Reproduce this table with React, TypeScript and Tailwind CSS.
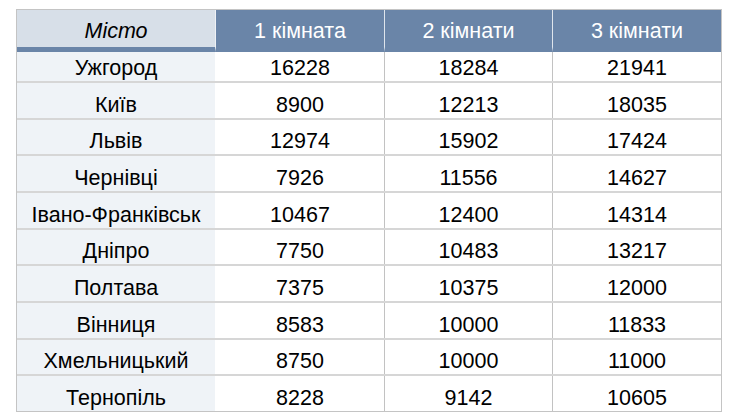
import React from "react";

const rows: [string, number, number, number][] = [
  ["Ужгород", 16228, 18284, 21941],
  ["Київ", 8900, 12213, 18035],
  ["Львів", 12974, 15902, 17424],
  ["Чернівці", 7926, 11556, 14627],
  ["Івано-Франківськ", 10467, 12400, 14314],
  ["Дніпро", 7750, 10483, 13217],
  ["Полтава", 7375, 10375, 12000],
  ["Вінниця", 8583, 10000, 11833],
  ["Хмельницький", 8750, 10000, 11000],
  ["Тернопіль", 8228, 9142, 10605],
];

export default function App() {
  return (
    <div
      className="w-[736px] h-[416px] bg-white pt-[9px] pl-[16px]"
      style={{ fontFamily: '"Liberation Sans", Arial, sans-serif' }}
    >
      <div className="w-[706px] h-[403px] flex flex-col border border-[#c4c4c4] text-[21.5px] text-black">
        <div className="flex h-[42px] shrink-0 leading-[24px]">
          <div className="w-[199px] border-r border-r-[#eef1f5] border-b-[5px] border-b-[#6a85a8] bg-[#d7dfe8] flex items-center justify-center italic pt-[5px]">
            Місто
          </div>
          <div className="w-[169px] border-r border-r-[#dfe5ec] border-b-[5px] border-b-[#6a85a8] bg-[#6a85a8] text-white flex items-center justify-center pt-[5px]">
            1 кімната
          </div>
          <div className="w-[168px] border-r border-r-[#dfe5ec] border-b-[5px] border-b-[#6a85a8] bg-[#6a85a8] text-white flex items-center justify-center pt-[5px]">
            2 кімнати
          </div>
          <div className="flex-1 border-b-[5px] border-b-[#6a85a8] bg-[#6a85a8] text-white flex items-center justify-center pt-[5px]">
            3 кімнати
          </div>
        </div>
        <div className="flex-1 flex flex-col">
          {rows.map((r, i) => (
            <div
              key={r[0]}
              className={
                i === 0
                  ? "flex h-[31px] shrink-0 border-b-2 border-[#d6d6d6]"
                  : i === rows.length - 1
                  ? "flex flex-1"
                  : "flex flex-1 border-b-2 border-[#d6d6d6]"
              }
            >
              <div className="w-[199px] border-r border-r-white bg-[#eff3f7] flex items-end justify-center pb-[1px] leading-[24px]">
                {r[0]}
              </div>
              <div className="w-[169px] border-r border-r-[#c2c2c2] flex items-end justify-center pb-[1px] leading-[24px]">
                {r[1]}
              </div>
              <div className="w-[168px] border-r border-r-[#c2c2c2] flex items-end justify-center pb-[1px] leading-[24px]">
                {r[2]}
              </div>
              <div className="flex-1 flex items-end justify-center pb-[1px] leading-[24px]">
                {r[3]}
              </div>
            </div>
          ))}
        </div>
      </div>
    </div>
  );
}
